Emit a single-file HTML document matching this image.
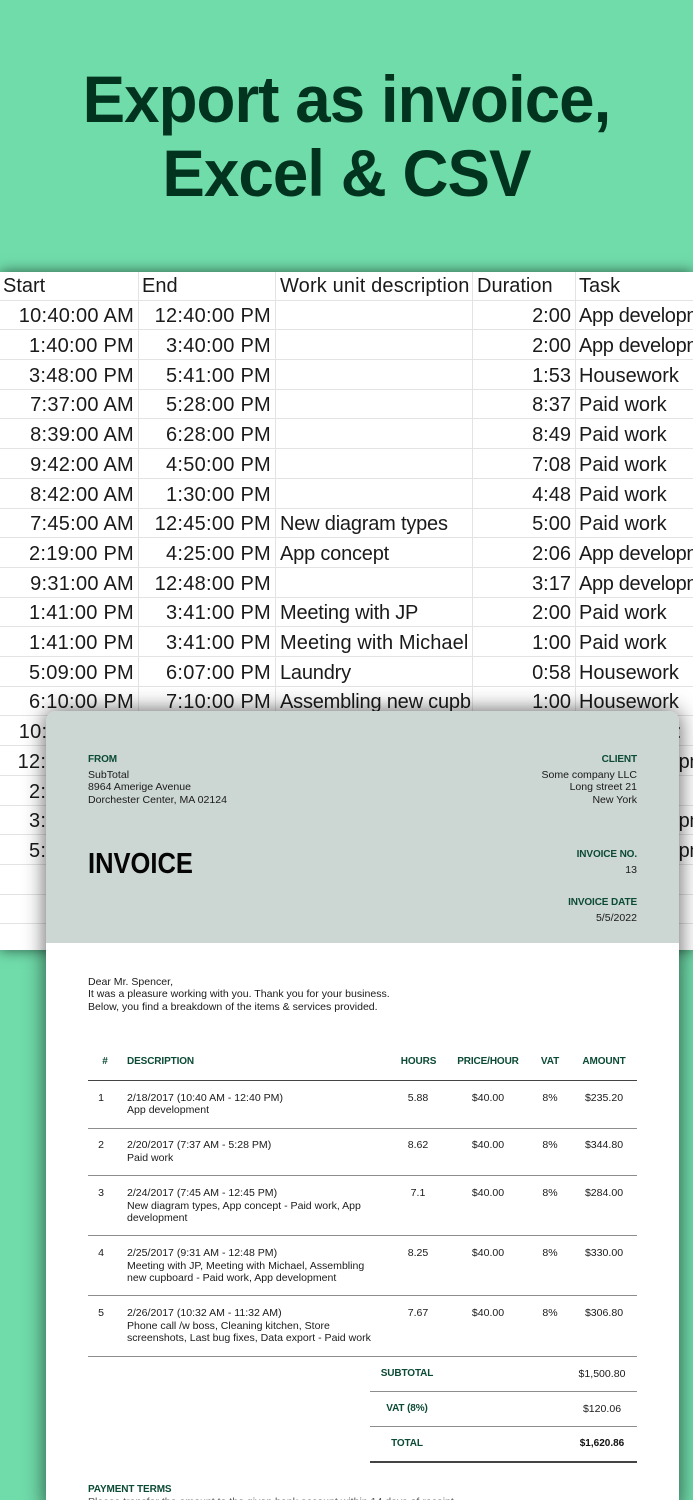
<!DOCTYPE html>
<html><head><meta charset="utf-8">
<style>
*{margin:0;padding:0;box-sizing:border-box}
html,body{width:693px;height:1500px;overflow:hidden;background:#70dcaa}
body{position:relative;font-family:"Liberation Sans",sans-serif}
h1{position:absolute;left:0;width:693px;top:62px;text-align:center;font-size:66px;line-height:74px;font-weight:700;letter-spacing:-1px;color:#02331f;transform:scaleX(.965);transform-origin:346px 0}
#sheet{position:absolute;left:0;top:272px;width:693px;height:678px;background:#fff;box-shadow:0 0 13px rgba(0,0,0,.6);overflow:hidden}
#rows{position:absolute;left:0;top:0;width:693px;height:678px;filter:blur(.35px);color:#1a1a1a;font-size:20px}
.r{position:absolute;left:0;width:693px;height:29.7px;line-height:29.7px;border-bottom:1.4px solid #e3e3e3}
.r span{position:absolute;top:1.7px;white-space:nowrap}
.r span:nth-child(1){right:559px;letter-spacing:.27px}
.r span:nth-child(2){right:422px;letter-spacing:.27px}
.r span:nth-child(3){left:280px;letter-spacing:-.2px}
.r span:nth-child(4){right:122px;letter-spacing:0}
.r span:nth-child(5){left:579px;letter-spacing:-.02px}
.r span.d{letter-spacing:-.35px}
.r span.e{left:582px;letter-spacing:-.35px}
.r span.k{left:676px}
.h span{top:.5px}
.h span:nth-child(1){left:3px;right:auto;letter-spacing:0}
.h span:nth-child(2){left:142px;right:auto;letter-spacing:0}
.h span:nth-child(3){letter-spacing:.15px}
.h span:nth-child(4){left:477px;right:auto;letter-spacing:0}
.v{position:absolute;top:0;width:1.4px;height:678px;background:#e3e3e3}
#inv{position:absolute;left:45.5px;top:710.5px;width:633px;height:800px;background:#fff;border-radius:10px 10px 0 0;box-shadow:0 0 22px rgba(0,0,0,.65)}
#top{position:absolute;left:0;top:0;width:633px;height:232px;background:#ccd6d3;border-radius:10px 10px 0 0}
#txt{position:absolute;left:0;top:.8px;width:693px;height:1500px;filter:blur(.3px);color:#1a1a1a;font-size:10.55px;line-height:12px}
#txt div{position:absolute;white-space:nowrap}
.g{color:#0b4a35;font-weight:700;font-size:10px;letter-spacing:-.12px}
.a{right:56px;text-align:right}
.c{width:100px;text-align:center}
.l{height:1px;background:#8d8d8d;margin-top:-.8px}
.ld{height:1.4px;background:#444;margin-top:-.8px}
</style></head><body>
<h1>Export as invoice,<br>Excel &amp; CSV</h1>

<div id="sheet"><div id="rows">
<div class="v" style="left:138px"></div><div class="v" style="left:275px"></div><div class="v" style="left:472px"></div><div class="v" style="left:575px"></div>
<div class="r h" style="top:-0.3px"><span>Start</span><span>End</span><span>Work unit description</span><span>Duration</span><span>Task</span></div>
<div class="r" style="top:28.7px"><span>10:40:00 AM</span><span>12:40:00 PM</span><span></span><span>2:00</span><span class="d">App development</span></div>
<div class="r" style="top:58.4px"><span>1:40:00 PM</span><span>3:40:00 PM</span><span></span><span>2:00</span><span class="d">App development</span></div>
<div class="r" style="top:88.1px"><span>3:48:00 PM</span><span>5:41:00 PM</span><span></span><span>1:53</span><span>Housework</span></div>
<div class="r" style="top:117.8px"><span>7:37:00 AM</span><span>5:28:00 PM</span><span></span><span>8:37</span><span>Paid work</span></div>
<div class="r" style="top:147.5px"><span>8:39:00 AM</span><span>6:28:00 PM</span><span></span><span>8:49</span><span>Paid work</span></div>
<div class="r" style="top:177.2px"><span>9:42:00 AM</span><span>4:50:00 PM</span><span></span><span>7:08</span><span>Paid work</span></div>
<div class="r" style="top:206.9px"><span>8:42:00 AM</span><span>1:30:00 PM</span><span></span><span>4:48</span><span>Paid work</span></div>
<div class="r" style="top:236.6px"><span>7:45:00 AM</span><span>12:45:00 PM</span><span>New diagram types</span><span>5:00</span><span>Paid work</span></div>
<div class="r" style="top:266.3px"><span>2:19:00 PM</span><span>4:25:00 PM</span><span>App concept</span><span>2:06</span><span class="d">App development</span></div>
<div class="r" style="top:296px"><span>9:31:00 AM</span><span>12:48:00 PM</span><span></span><span>3:17</span><span class="d">App development</span></div>
<div class="r" style="top:325.7px"><span>1:41:00 PM</span><span>3:41:00 PM</span><span>Meeting with JP</span><span>2:00</span><span>Paid work</span></div>
<div class="r" style="top:355.4px"><span>1:41:00 PM</span><span>3:41:00 PM</span><span style="letter-spacing:.08px">Meeting with Michael</span><span>1:00</span><span>Paid work</span></div>
<div class="r" style="top:385.1px"><span>5:09:00 PM</span><span>6:07:00 PM</span><span>Laundry</span><span>0:58</span><span>Housework</span></div>
<div class="r" style="top:414.8px"><span>6:10:00 PM</span><span>7:10:00 PM</span><span>Assembling new cupb</span><span>1:00</span><span>Housework</span></div>
<div class="r" style="top:444.5px"><span>10:32:00 AM</span><span></span><span></span><span></span><span class="k">:</span></div>
<div class="r" style="top:474.2px"><span>12:30:00 PM</span><span></span><span></span><span></span><span class="e">App development</span></div>
<div class="r" style="top:503.9px"><span>2:30:00 PM</span><span></span><span></span><span></span><span></span></div>
<div class="r" style="top:533.6px"><span>3:30:00 PM</span><span></span><span></span><span></span><span class="e">App development</span></div>
<div class="r" style="top:563.3px"><span>5:30:00 PM</span><span></span><span></span><span></span><span class="e">App development</span></div>
<div class="r" style="top:593px"></div>
<div class="r" style="top:622.7px"></div>
</div></div>

<div id="inv"><div id="top"></div></div>

<div id="txt">
<div class="g" style="left:88px;top:753px">FROM</div>
<div style="left:88px;top:768px">SubTotal</div>
<div style="left:88px;top:780.5px">8964 Amerige Avenue</div>
<div style="left:88px;top:793px">Dorchester Center, MA 02124</div>
<div style="left:88px;top:846.2px;font-size:29px;line-height:34px;font-weight:700;color:#050505;transform:scaleX(.88);transform-origin:left">INVOICE</div>

<div class="g a" style="top:753px">CLIENT</div>
<div class="a" style="top:768px">Some company LLC</div>
<div class="a" style="top:780.5px">Long street 21</div>
<div class="a" style="top:793px">New York</div>
<div class="g a" style="top:848px">INVOICE NO.</div>
<div class="a" style="top:863px">13</div>
<div class="g a" style="top:896px">INVOICE DATE</div>
<div class="a" style="top:911px">5/5/2022</div>

<div style="left:88px;top:975px">Dear Mr. Spencer,</div>
<div style="left:88px;top:987.5px">It was a pleasure working with you. Thank you for your business.</div>
<div style="left:88px;top:1000px">Below, you find a breakdown of the items &amp; services provided.</div>

<div class="g c" style="left:55px;top:1055px">#</div>
<div class="g" style="left:127px;top:1055px">DESCRIPTION</div>
<div class="g c" style="left:368.5px;top:1055px">HOURS</div>
<div class="g c" style="left:438px;top:1055px">PRICE/HOUR</div>
<div class="g c" style="left:500px;top:1055px">VAT</div>
<div class="g c" style="left:554px;top:1055px">AMOUNT</div>
<div class="ld" style="left:88px;width:549px;top:1079.6px"></div>

<div class="c" style="left:51px;top:1091px">1</div>
<div style="left:127px;top:1091px">2/18/2017 (10:40 AM - 12:40 PM)</div>
<div style="left:127px;top:1103.5px">App development</div>
<div class="c" style="left:368px;top:1091px">5.88</div><div class="c" style="left:438px;top:1091px">$40.00</div><div class="c" style="left:500px;top:1091px">8%</div><div class="c" style="left:554px;top:1091px">$235.20</div>
<div class="l" style="left:88px;width:549px;top:1127.5px"></div>

<div class="c" style="left:51px;top:1138px">2</div>
<div style="left:127px;top:1138px">2/20/2017 (7:37 AM - 5:28 PM)</div>
<div style="left:127px;top:1151px">Paid work</div>
<div class="c" style="left:368px;top:1138px">8.62</div><div class="c" style="left:438px;top:1138px">$40.00</div><div class="c" style="left:500px;top:1138px">8%</div><div class="c" style="left:554px;top:1138px">$344.80</div>
<div class="l" style="left:88px;width:549px;top:1175px"></div>

<div class="c" style="left:51px;top:1186px">3</div>
<div style="left:127px;top:1186px">2/24/2017 (7:45 AM - 12:45 PM)</div>
<div style="left:127px;top:1199px">New diagram types, App concept - Paid work, App</div>
<div style="left:127px;top:1211.5px">development</div>
<div class="c" style="left:368px;top:1186px">7.1</div><div class="c" style="left:438px;top:1186px">$40.00</div><div class="c" style="left:500px;top:1186px">8%</div><div class="c" style="left:554px;top:1186px">$284.00</div>
<div class="l" style="left:88px;width:549px;top:1235px"></div>

<div class="c" style="left:51px;top:1246px">4</div>
<div style="left:127px;top:1246px">2/25/2017 (9:31 AM - 12:48 PM)</div>
<div style="left:127px;top:1259px">Meeting with JP, Meeting with Michael, Assembling</div>
<div style="left:127px;top:1271.5px">new cupboard - Paid work, App development</div>
<div class="c" style="left:368px;top:1246px">8.25</div><div class="c" style="left:438px;top:1246px">$40.00</div><div class="c" style="left:500px;top:1246px">8%</div><div class="c" style="left:554px;top:1246px">$330.00</div>
<div class="l" style="left:88px;width:549px;top:1295px"></div>

<div class="c" style="left:51px;top:1306px">5</div>
<div style="left:127px;top:1306px">2/26/2017 (10:32 AM - 11:32 AM)</div>
<div style="left:127px;top:1319px">Phone call /w boss, Cleaning kitchen, Store</div>
<div style="left:127px;top:1331.5px">screenshots, Last bug fixes, Data export - Paid work</div>
<div class="c" style="left:368px;top:1306px">7.67</div><div class="c" style="left:438px;top:1306px">$40.00</div><div class="c" style="left:500px;top:1306px">8%</div><div class="c" style="left:554px;top:1306px">$306.80</div>
<div class="l" style="left:88px;width:549px;top:1355.5px"></div>

<div class="g c" style="left:357px;top:1367px">SUBTOTAL</div>
<div class="c" style="left:552px;top:1367px">$1,500.80</div>
<div class="l" style="left:369.5px;width:267.5px;top:1390.5px"></div>
<div class="g c" style="left:357px;top:1402px">VAT (8%)</div>
<div class="c" style="left:552px;top:1402px">$120.06</div>
<div class="l" style="left:369.5px;width:267.5px;top:1425.5px"></div>
<div class="g c" style="left:357px;top:1437px">TOTAL</div>
<div class="c" style="left:552px;top:1437px;font-weight:700;color:#111;font-size:10px">$1,620.86</div>
<div class="ld" style="left:369.5px;width:267.5px;top:1461px;height:1.6px"></div>

<div class="g" style="left:88px;top:1483.5px">PAYMENT TERMS</div>
<div style="left:88px;top:1495px;color:#555">Please transfer the amount to the given bank account within 14 days of receipt.</div>
</div>
</body></html>
